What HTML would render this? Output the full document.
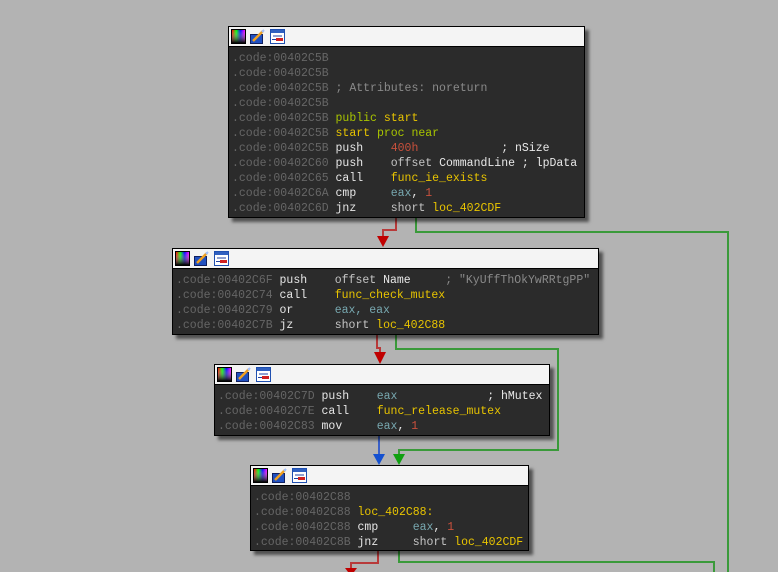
<!DOCTYPE html>
<html><head><meta charset="utf-8"><style>
body{margin:0;width:778px;height:572px;background:#b3b3b3;position:relative;overflow:hidden;font-family:"Liberation Mono","DejaVu Sans Mono",monospace;}
.blk{position:absolute;background:#2b2b2b;border:1px solid #000;box-shadow:4px 4px 3px rgba(0,0,0,0.55);}
.hd{height:19px;background:#f4f4f4;border-bottom:1px solid #000;position:relative;}
.ic{position:absolute;top:2px;width:15px;height:15px;}
.code{padding:4px 0 0 3px;font-size:11.5px;line-height:15px;white-space:pre;color:#e6e6e6;}
.a{color:#666}.c{color:#8a8a8a}.y{color:#e8c400}.g{color:#a8c400}.r{color:#c8503c}.t{color:#78a8b0}.w{color:#e8e8e8}.o{color:#c4c4c4}
svg.e{position:absolute;left:0;top:0}
</style></head><body>
<svg class="e" width="778" height="572">
<g fill="none" stroke-width="2">
<polyline stroke="#b83a3a" points="396,217 396,230 383,230 383,236"/>
<polyline stroke="#3a9a3a" points="416,217 416,232 728,232 728,572"/>
<polyline stroke="#b83a3a" points="377,334 377,348 380,348 380,352"/>
<polyline stroke="#3a9a3a" points="396,334 396,349 558,349 558,450 399,450 399,454"/>
<polyline stroke="#3a60c8" points="379,435 379,449 379,454"/>
<polyline stroke="#b83a3a" points="378,550 378,563 351,563 351,568"/>
<polyline stroke="#3a9a3a" points="399,550 399,562 714,562 714,572"/>
</g>
<polygon fill="#c00000" points="377,236 389,236 383,247"/>
<polygon fill="#c00000" points="374,352 386,352 380,364"/>
<polygon fill="#1450d0" points="373,454 385,454 379,465"/>
<polygon fill="#10a010" points="393,454 405,454 399,465"/>
<polygon fill="#c00000" points="345,568 357,568 351,576"/>
</svg>

<div id="b1" class="blk" style="left:228px;top:26px;width:355px;height:190px"></div>
<div id="b2" class="blk" style="left:172px;top:248px;width:425px;height:85px"></div>
<div id="b3" class="blk" style="left:214px;top:364px;width:334px;height:70px"></div>
<div id="b4" class="blk" style="left:250px;top:465px;width:277px;height:84px"></div>

<script>
var icons='<svg class="ic" style="left:2px" viewBox="0 0 15 15"><defs><linearGradient id="h" x1="0" x2="1"><stop offset="0" stop-color="#f00"/><stop offset=".33" stop-color="#0f0"/><stop offset=".66" stop-color="#00f"/><stop offset="1" stop-color="#f0f"/></linearGradient><linearGradient id="v" x1="0" y1="0" x2="0" y2="1"><stop offset="0" stop-color="#fff" stop-opacity="0"/><stop offset="1" stop-color="#000"/></linearGradient></defs><rect x="0" y="0" width="15" height="15" fill="#000"/><rect x="1" y="1" width="13" height="13" fill="url(#h)"/><rect x="1" y="1" width="13" height="13" fill="url(#v)"/></svg>'+
'<svg class="ic" style="left:21px" viewBox="0 0 15 15"><rect x="0.5" y="5.5" width="12" height="9" fill="#2050c0" stroke="#102060"/><line x1="3" y1="12" x2="13" y2="2" stroke="#f0a020" stroke-width="2.5"/><line x1="12" y1="3" x2="14" y2="1" stroke="#a0c0ff" stroke-width="2"/></svg>'+
'<svg class="ic" style="left:41px" viewBox="0 0 15 15"><rect x="0.5" y="0.5" width="14" height="14" fill="#fff" stroke="#2050b0"/><rect x="1" y="1" width="13" height="3" fill="#3060c0"/><line x1="3" y1="7" x2="12" y2="7" stroke="#2040a0"/><rect x="6" y="9" width="7" height="3" fill="#d02020"/><line x1="2" y1="10.5" x2="6" y2="10.5" stroke="#2040a0"/></svg>';
function L(a,rest){return '<span class="a">'+a+'</span>'+(rest||'');}
var b={
b1:[L('.code:00402C5B'),L('.code:00402C5B'),L('.code:00402C5B',' <span class="c">; Attributes: noreturn</span>'),L('.code:00402C5B'),
L('.code:00402C5B',' <span class="g">public</span> <span class="y">start</span>'),
L('.code:00402C5B',' <span class="y">start</span> <span class="g">proc near</span>'),
L('.code:00402C5B',' push    <span class="r">400h</span>            <span class="w">; nSize</span>'),
L('.code:00402C60',' push    <span class="o">offset</span> <span class="w">CommandLine ; lpData</span>'),
L('.code:00402C65',' call    <span class="y">func_ie_exists</span>'),
L('.code:00402C6A',' cmp     <span class="t">eax</span>, <span class="r">1</span>'),
L('.code:00402C6D',' jnz     <span class="o">short</span> <span class="y">loc_402CDF</span>')],
b2:[L('.code:00402C6F',' push    <span class="o">offset</span> <span class="w">Name</span>     <span class="c">; "KyUffThOkYwRRtgPP"</span>'),
L('.code:00402C74',' call    <span class="y">func_check_mutex</span>'),
L('.code:00402C79',' or      <span class="t">eax, eax</span>'),
L('.code:00402C7B',' jz      <span class="o">short</span> <span class="y">loc_402C88</span>')],
b3:[L('.code:00402C7D',' push    <span class="t">eax</span>             <span class="w">; hMutex</span>'),
L('.code:00402C7E',' call    <span class="y">func_release_mutex</span>'),
L('.code:00402C83',' mov     <span class="t">eax</span>, <span class="r">1</span>')],
b4:[L('.code:00402C88'),L('.code:00402C88',' <span class="y">loc_402C88:</span>'),
L('.code:00402C88',' cmp     <span class="t">eax</span>, <span class="r">1</span>'),
L('.code:00402C8B',' jnz     <span class="o">short</span> <span class="y">loc_402CDF</span>')]};
for(var k in b){document.getElementById(k).innerHTML='<div class="hd">'+icons+'</div><div class="code">'+b[k].join('\n')+'</div>';}
</script>
</body></html>
